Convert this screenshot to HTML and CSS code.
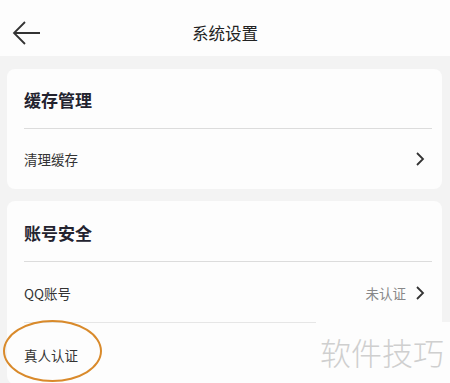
FILE: index.html
```html
<!DOCTYPE html>
<html lang="zh">
<head>
<meta charset="utf-8">
<link rel="stylesheet" href="styles.css">
</head>
<body>
<div class="page">
  <header class="topbar">
    <svg class="back" width="30" height="24" viewBox="0 0 30 24"><path d="M28 12H2M13 1L2 12l11 11" fill="none" stroke="#333" stroke-width="1.8"/></svg>
    <div class="title">系统设置</div>
  </header>
  <main class="content">
    <section class="card">
      <div class="card-title">缓存管理</div>
      <div class="row">
        <span class="label">清理缓存</span>
        <span class="right"><svg class="chev" width="10" height="16" viewBox="0 0 10 16"><path d="M2 2l6 6-6 6" fill="none" stroke="#333" stroke-width="1.8"/></svg></span>
      </div>
    </section>
    <section class="card card2">
      <div class="card-title">账号安全</div>
      <div class="row">
        <span class="label">QQ账号</span>
        <span class="right"><span class="status">未认证</span><svg class="chev" width="10" height="16" viewBox="0 0 10 16"><path d="M2 2l6 6-6 6" fill="none" stroke="#333" stroke-width="1.8"/></svg></span>
      </div>
      <div class="row">
        <span class="label">真人认证</span>
      </div>
    </section>
  </main>
  <div class="circle"></div>
  <div class="watermark">软件技巧</div>
</div>
</body>
</html>
```
FILE: styles.css
```css
html, body { margin: 0; padding: 0; }
body {
  width: 450px; height: 383px; overflow: hidden;
  background: #f3f3f3;
  font-family: "Noto Sans CJK SC", "Noto Sans", sans-serif;
  color: #333;
}
.page { position: relative; width: 450px; height: 383px; }
.topbar {
  height: 56px; background: #fdfdfd;
  display: flex; align-items: center; justify-content: center;
  position: relative;
}
.back { position: absolute; left: 12px; top: 21px; }
.title { font-size: 16.5px; color: #222; margin-top: 9px; }
.content { padding: 13px 8px 0 7px; display: flex; flex-direction: column; gap: 12px; }
.card {
  background: #fdfdfd; border-radius: 8px;
  padding: 0 10px 0 17px;
}
.card-title {
  font-size: 17px; font-weight: bold; color: #23232f;
  height: 59px; line-height: 62px;
  border-bottom: 1.5px solid #dcdcdc;
}
.card2 .card-title { height: 60px; line-height: 64px; }
.row {
  height: 60px; display: flex; align-items: center; justify-content: space-between;
  border-bottom: 1px solid #e6e6e6;
}
.card2 .row { height: 61px; padding-top: 2px; box-sizing: border-box; }
.card .row:last-child { border-bottom: none; }
.label { font-size: 13.5px; color: #333; }
.right { display: flex; align-items: center; gap: 9px; padding-right: 7px; }
.status { font-size: 13.5px; color: #888; }
.circle {
  position: absolute; left: 3px; top: 320px;
  width: 95px; height: 58px;
  border: 2px solid #d98a2b; border-radius: 50%;
}
.watermark {
  position: absolute; left: 316px; top: 322px;
  width: 134px; height: 61px; background: #fdfdfd;
  font-size: 31px; color: #cfcfcf; line-height: 60px; padding-left: 4px;
  box-sizing: border-box; letter-spacing: 0;
  font-weight: 300;
}
```
